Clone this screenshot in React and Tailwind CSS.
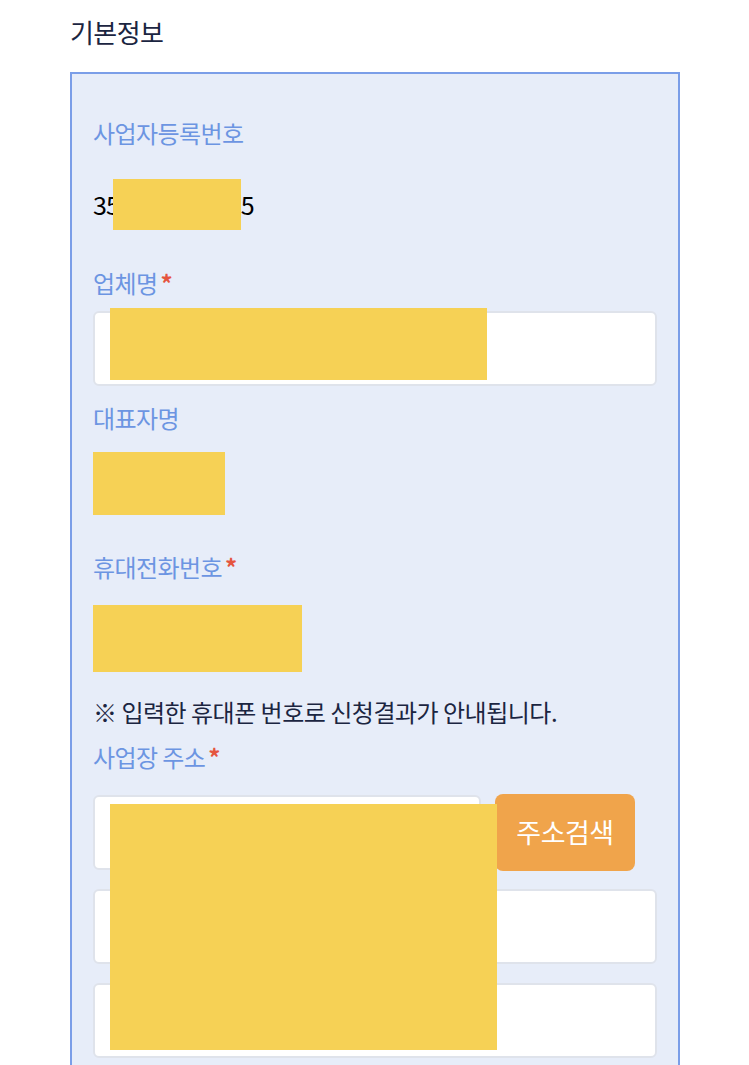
import React from 'react';

const Label = ({ children, required, className = '' }) => (
  <div className={`h-[33px] text-[24px] leading-[33px] text-[#6c95e2] tracking-[-0.6px] ${className}`}>
    {children}
    {required && <span className="ml-[3px] font-bold text-[#e5553f]">*</span>}
  </div>
);

const Input = ({ className = '', children }) => (
  <div className={`relative h-[75px] rounded-md border-2 border-[#dfe3eb] bg-white ${className}`}>
    {children}
  </div>
);

const Mask = ({ className = '' }) => <div className={`bg-[#f6d155] ${className}`} />;

export default function App() {
  return (
    <div className="min-h-[1065px] bg-white pl-[70px] pt-[14px] font-['Noto_Sans_CJK_KR','Noto_Sans',sans-serif]">
      <h2 className="h-[36px] text-[26px] leading-[36px] text-[#1b2541] tracking-[-0.6px]">기본정보</h2>

      <div className="mt-[22px] w-[610px] h-[1000px] border-2 border-[#7b9ee8] bg-[#e7edf9] px-[21px] pt-[42px]">
        <Label>사업자등록번호</Label>
        <div className="mt-[37px] flex h-[36px] items-center text-[25px] leading-[36px] text-black tracking-[-1px]">
          <span>35</span>
          <Mask className="-ml-[6px] w-[128px] h-[51px] shrink-0" />
          <span>5</span>
        </div>

        <Label required className="mt-[44px]">업체명</Label>
        <Input className="mt-[12px] w-[564px]">
          <Mask className="absolute left-[15px] -top-[5px] w-[377px] h-[72px]" />
        </Input>

        <Label className="mt-[15px]">대표자명</Label>
        <Mask className="mt-[18px] w-[132px] h-[63px]" />

        <Label required className="mt-[35px]">휴대전화번호</Label>
        <Mask className="mt-[22px] w-[209px] h-[67px]" />

        <p className="mt-[23px] h-[33px] text-[24px] leading-[33px] text-[#1b2541] tracking-[-0.5px]">
          ※ 입력한 휴대폰 번호로 신청결과가 안내됩니다.
        </p>

        <Label required className="mt-[12px]">사업장 주소</Label>
        <div className="relative mt-[21px] w-[564px]">
          <div className="flex items-start gap-[14px]">
            <Input className="mt-px w-[388px]" />
            <button className="h-[77px] w-[140px] rounded-lg bg-[#f0a44b] text-[27px] text-white tracking-[-0.5px]">
              주소검색
            </button>
          </div>
          <Input className="mt-[18px]" />
          <Input className="mt-[19px]" />
          <Mask className="absolute left-[17px] top-[10px] w-[387px] h-[246px]" />
        </div>
      </div>
    </div>
  );
}
